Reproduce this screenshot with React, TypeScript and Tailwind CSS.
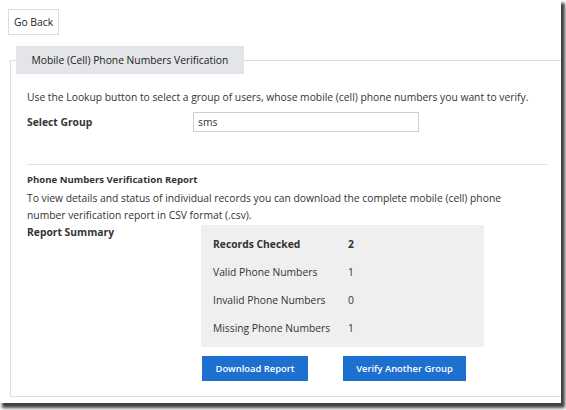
import React from "react";

const summaryRows = [
    { label: "Records Checked", value: "2", bold: true },
    { label: "Valid Phone Numbers", value: "1" },
    { label: "Invalid Phone Numbers", value: "0" },
    { label: "Missing Phone Numbers", value: "1" },
];

export default function App() {
    return (
        <div className="w-[566px] h-[410px] bg-white overflow-hidden text-[#333] font-['Open_Sans',sans-serif]">
            <div className="w-[561px] h-[403px] bg-white overflow-hidden shadow-[3px_4px_3px_1px_rgba(0,0,0,0.75)] pt-2 pl-2">
                {/* Go Back */}
                <button className="h-[26px] px-[5px] border border-[#dcdcdc] bg-white text-[10.3px] leading-none text-[#222]">
                    Go Back
                </button>

                {/* Panel */}
                <fieldset className="mt-[11px] ml-[2px] w-[570px] border border-[#dedede] pl-[5px] pr-0 pb-[15px]">
                    <legend className="h-[28px] px-[15.5px] bg-[#e3e5e8] text-[10.3px] leading-[28px] text-[#222]">
                        Mobile (Cell) Phone Numbers Verification
                    </legend>

                    <div className="pl-[11px] w-[531px]">
                        <p className="mt-[14px] text-[10.3px] leading-[18px]">
                            Use the Lookup button to select a group of users, whose mobile (cell) phone numbers you want to verify.
                        </p>

                        <div className="mt-[6px] flex items-center">
                            <div className="w-[166px] text-[10.3px] font-bold leading-[18px]">Select Group</div>
                            <input
                                readOnly
                                value="sms"
                                className="w-[226px] h-[20px] border border-[#cfcfcf] px-[4px] text-[10.3px] text-[#333] outline-none"
                            />
                        </div>

                        <div className="mt-[32px] border-t border-[#e2e2e2]" />

                        <h3 className="mt-[7px] text-[9.6px] font-bold leading-[16px]">Phone Numbers Verification Report</h3>
                        <p className="mt-[2px] w-[490px] text-[10.3px] leading-[17px]">
                            To view details and status of individual records you can download the complete mobile (cell) phone number verification report in CSV format (.csv).
                        </p>

                        <div className="flex -mt-[1px]">
                            <div className="w-[174px] text-[10.3px] font-bold leading-[18px]">Report Summary</div>
                            <div className="mt-[2px]">
                                <div className="w-[283px] bg-[#efefef] px-[12px] pt-[6px] pb-[4px]">
                                    {summaryRows.map((r) => (
                                        <div key={r.label} className="flex h-[28px] items-center text-[10.3px]">
                                            <span className={`w-[135px] ${r.bold ? "font-bold" : ""}`}>{r.label}</span>
                                            <span className={r.bold ? "font-bold" : ""}>{r.value}</span>
                                        </div>
                                    ))}
                                </div>
                                <div className="mt-[9px] flex gap-[35px] pl-[1px]">
                                    <button className="w-[106px] h-[25px] bg-[#1d6fd0] text-white text-[9.4px] font-semibold">
                                        Download Report
                                    </button>
                                    <button className="w-[123px] h-[25px] bg-[#1d6fd0] text-white text-[9.4px] font-semibold">
                                        Verify Another Group
                                    </button>
                                </div>
                            </div>
                        </div>
                    </div>
                </fieldset>
            </div>
        </div>
    );
}
